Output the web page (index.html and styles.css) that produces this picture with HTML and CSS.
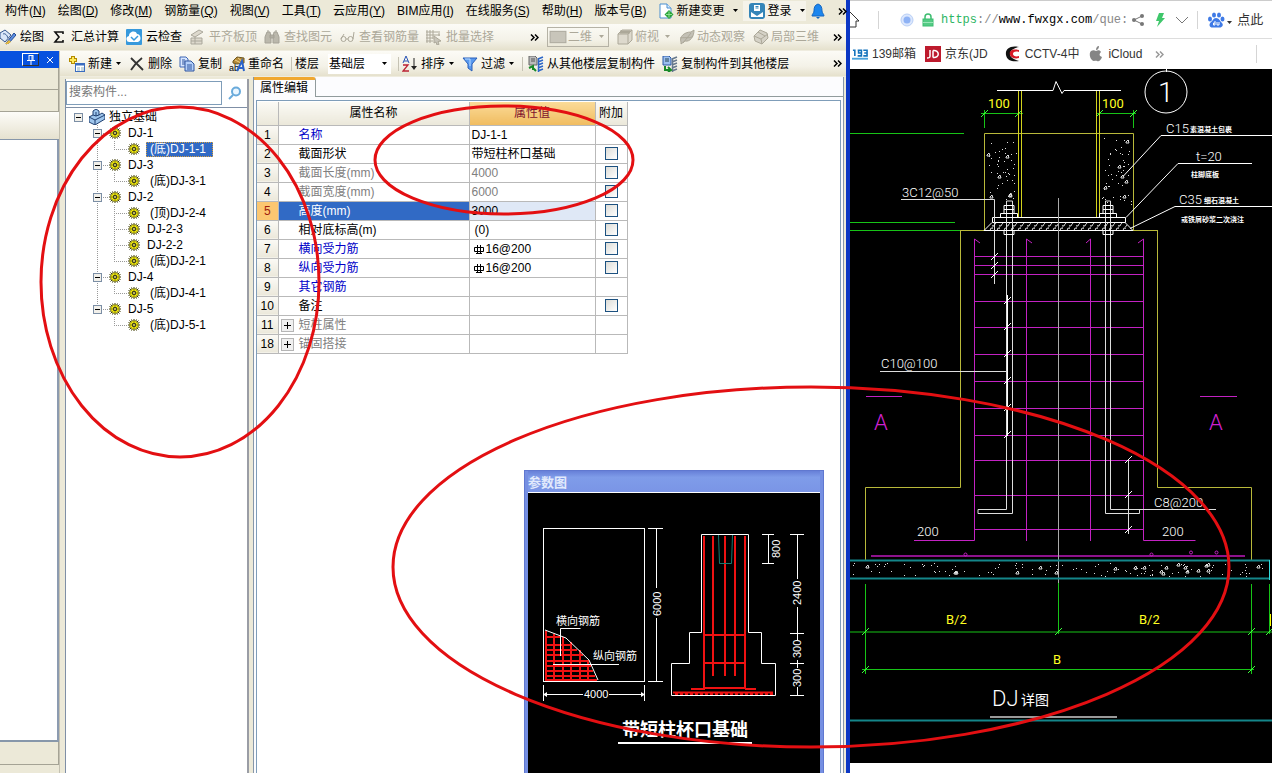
FILE: index.html
```html
<!DOCTYPE html>
<html lang="zh-CN">
<head>
<meta charset="utf-8">
<title>构件属性编辑</title>
<link rel="stylesheet" href="styles.css">
</head>
<body>
<svg class="defs" aria-hidden="true">
  <symbol id="gear" viewBox="0 0 12 12"><path d="M6 0v12M0 6h12M1.500 1.500l9 9M10.500 1.500l-9 9M3.500 .5l5 11M8.500 .5l-5 11M.5 3.500l11 5M.5 8.500l11-5" stroke="#3c3a00"/><circle cx="6" cy="6" r="4.300" fill="#f6ee10" stroke="#6d6900" stroke-width=".6"/><path d="M6 2v8M2 6h8M3.500 3.500l5 5M8.500 3.500l-5 5" stroke="#6d6900" stroke-width=".8"/><circle cx="6" cy="6" r="1.500" fill="#fff86a" stroke="#222"/></symbol>
  <symbol id="down" viewBox="0 0 7 4"><path d="M1 0h5L3.500 3z" fill="currentColor"/></symbol>
  <symbol id="more" viewBox="0 0 9 7"><path d="M1 .5l3 3-3 3M5 .5l3 3-3 3" fill="none" stroke="currentColor" stroke-width="1.500"/></symbol>
</svg>
<div class="screen">
<main class="app">
  <nav class="menubar">
    <button>构件(<u>N</u>)</button><button>绘图(<u>D</u>)</button><button>修改(<u>M</u>)</button><button>钢筋量(<u>Q</u>)</button><button>视图(<u>V</u>)</button><button>工具(<u>T</u>)</button><button>云应用(<u>Y</u>)</button><button>BIM应用(<u>I</u>)</button><button>在线服务(<u>S</u>)</button><button>帮助(<u>H</u>)</button><button>版本号(<u>B</u>)</button>
    <div class="account">
      <button><svg class="ic" viewBox="0 0 16 16"><path d="M2 1h7l4 4v10H2z" fill="#fff" stroke="#4b8fd0"/><path d="M9 1v4h4" fill="#d8ecff" stroke="#4b8fd0"/><path d="M11 7l4.500 4.500L11 16l-4.500-4.500z" fill="#28a33a"/><path d="M11 8.500v6M8 11.500h6" stroke="#8fe08f"/></svg>新建变更<svg class="dn"><use href="#down"/></svg></button>
      <button class="login"><svg class="ic" viewBox="0 0 16 16"><rect width="16" height="16" rx="3" fill="#3585b8"/><path d="M5 2h6v6H5z" fill="#fff"/><path d="M6.500 3.500h3M6.500 5h3" stroke="#3585b8"/><path d="M2 14V9l3 2 3 2 3-2 3-2v5z" fill="#fff"/></svg>登录<svg class="dn"><use href="#down"/></svg></button>
      <button aria-label="通知"><svg class="ic" viewBox="0 0 16 16"><path d="M8 1C5 2 4 4 4 8c0 2-2 3-2 5h12c0-2-2-3-2-5 0-4-1-6-4-7z" fill="#1c86ee" stroke="#1466c0"/><path d="M6 14h4l-2 2z" fill="#1466c0"/></svg></button>
      <button class="mo" aria-label="更多"><svg><use href="#more"/></svg></button>
    </div>
  </nav>
  <div class="toolbar">
    <button><svg class="ic" viewBox="0 0 16 16"><path d="M0 4l5-3 6 5-6 7-5-4z" fill="#d9e6f8" stroke="#35578f"/><path d="M3 5c2-1 4 1 5 4" fill="none" stroke="#35578f"/><path d="M7 13l7-9 2 2-7 8-3 1z" fill="#5d8fe0" stroke="#254b94"/><path d="M5 15l4-4 2 2-3 2z" fill="#e8b93c"/></svg>绘图</button>
    <button><svg class="ic" viewBox="0 0 16 16"><path d="M12 5V3H4l4 5-4 5h8v-2" fill="none" stroke="#111" stroke-width="1.600"/></svg>汇总计算</button>
    <button><svg class="ic" viewBox="0 0 16 16"><rect width="16" height="16" rx="1" fill="#3799dc"/><path d="M4 13a3 3 0 0 1-1-6c0-5 7-6 8-2 4 0 5 7 1 8z" fill="#fff"/><path d="M5 8l3 3 4-4" fill="none" stroke="#3799dc" stroke-width="1.500"/></svg>云检查</button>
    <button disabled><svg class="ic" viewBox="0 0 16 16"><path d="M2 6l8-5 4 2-8 5zM2 9h11v6H2zM2 12h11M6 8v7" fill="#ddd9cd" stroke="#aaa79b"/></svg>平齐板顶</button>
    <button disabled><svg class="ic" viewBox="0 0 16 16"><path d="M1 13V8l2-5h3l1 5v6H1zM9 14V8l1-5h3l2 5v6zM6 6h4v3H6zM4 3V1m8 2V1" fill="#bbb8ac" stroke="#a5a297"/></svg>查找图元</button>
    <button disabled><svg class="ic" viewBox="0 0 16 16"><circle cx="4.500" cy="10" r="2.500"/><circle cx="11.500" cy="10" r="2.500"/><path d="M7 10h2M2 10L5 5M14 10l1-7" /></svg>查看钢筋量</button>
    <button disabled><svg class="ic" viewBox="0 0 16 16"><path d="M1 1v13M4 1v13M7 1v9M0 3h12M0 6h14M0 9h7M0 12h7M13 2v5"/><path d="M8 7l7 5-3 .5 1 3-2 .5-1-3-2 1z" fill="#c8c5ba"/></svg>批量选择</button>
    <div class="viewtools">
      <button class="mo" aria-label="更多工具"><svg><use href="#more"/></svg></button>
      <span class="combo dim"><svg viewBox="0 0 16 12"><rect x="1" y="1" width="14" height="10" fill="#c8c5ba" stroke="#b0ada2"/></svg><select disabled aria-label="视图维度"><option>二维</option></select><svg class="dn"><use href="#down"/></svg></span>
      <button disabled><svg class="ic" viewBox="0 0 16 16"><path d="M1 5l4-4h10v10l-4 4H1z" fill="#ddd9cd"/><path d="M1 5h10v10M11 5l4-4"/><path d="M3 3h10" stroke-width="3"/></svg>俯视<svg class="dn"><use href="#down"/></svg></button>
      <button disabled><svg class="ic" viewBox="0 0 16 16"><path d="M2 13C0 8 5 3 12 3l3-2c0 7-4 12-9 11l-4 3z" fill="#c3c0b5"/><path d="M1 9c6-1 10 1 13-2M4 14L12 4"/></svg>动态观察</button>
      <button disabled><svg class="ic" viewBox="0 0 16 16"><path d="M1 7l6-6 7 3 1 5-6 6-7-3z" fill="#d5d2c7"/><path d="M1 7l7 3 7-5M8 10l1 5M5 3l7 4"/></svg>局部三维</button>
      <button class="mo" aria-label="更多视图"><svg><use href="#more"/></svg></button>
    </div>
  </div>
  <div class="work">
    <aside class="dock">
      <div class="docktitle"><button aria-label="固定"><svg viewBox="0 0 10 10"><path d="M3 0v5M7 0v5M3 .5h4M1 5.500h8M5 6v4M6 1v4" stroke="#fff" fill="none"/></svg></button><button class="x" aria-label="关闭"><svg viewBox="0 0 8 8"><path d="M1 1l6 6M7 1L1 7" stroke="#fff"/></svg></button></div>
      <div class="d1"></div><div class="d2"></div><div class="d3"></div><div class="d4"></div><div class="d5"></div><div class="d6"></div>
    </aside>
    <section class="center">
      <div class="toolbar second">
        <button><svg class="ic" viewBox="0 0 16 16"><path d="M4 0v8M0 4h8" stroke="#b38b00" stroke-width="4"/><path d="M4 1v6M1 4h6" stroke="#ffe95a" stroke-width="2"/><rect x="6.500" y="7.500" width="9" height="8" fill="#fff" stroke="#3a6cc0"/><path d="M7 8.500h8" stroke="#3a6cc0" stroke-width="2"/><path d="M8 12h3M12 12h3M8 14h3M12 14h3" stroke="#8ab"/></svg>新建<svg class="dn"><use href="#down"/></svg></button>
        <button><svg class="ic" viewBox="0 0 16 16"><path d="M2 2l12 12M13 2C9 5 5 9 2 14" stroke="#333" stroke-width="1.800" fill="none"/></svg>删除</button>
        <button><svg class="ic" viewBox="0 0 16 16"><path d="M1 1h6l2 2v8H1z" fill="#d7e6ff" stroke="#3f67b5"/><path d="M6 5h6l3 3v7H6z" fill="#b4d0fa" stroke="#2e559f"/><path d="M3 4h3M3 6h3M3 8h3M8 9h5M8 11h5M8 13h5" stroke="#2e559f"/></svg>复制</button>
        <button><svg class="ic" viewBox="0 0 16 16"><path d="M4 5l4-4 7 1v5L8 8 4 7z" fill="#b58b38" stroke="#6f5720"/><path d="M6 4l6 3M9 2l5 4" stroke="#f3d489"/><text x="0" y="15" class="abi">ab</text><path d="M8 15L13 5l2 10M10 12h5" stroke="#2a62c9" stroke-width="2" fill="none"/></svg>重命名</button>
        <span class="sep"></span>
        <label class="floor">楼层<span class="combo"><select><option>基础层</option></select><svg class="dn"><use href="#down"/></svg></span></label>
        <span class="sep"></span>
        <button><svg class="ic" viewBox="0 0 16 16"><path d="M1 7l3-7 3 7M2 5h4" stroke="#2b55b5" fill="none"/><path d="M1 9h5l-5 6h6" stroke="#b23" fill="none" stroke-width="1.300"/><path d="M12 2v10" stroke="#222"/><path d="M9 10h6l-3 4z" fill="#222"/></svg>排序<svg class="dn"><use href="#down"/></svg></button>
        <button><svg class="ic" viewBox="0 0 16 16"><path d="M1 2h14L10 8v7l-4-3V8z" fill="#5a9af0" stroke="#2a5fb8"/><path d="M3 3h5L8 10" stroke="#b9dbff" fill="none"/></svg>过滤<svg class="dn"><use href="#down"/></svg></button>
        <span class="sep"></span>
        <button class="from"><svg class="ic" viewBox="0 0 16 16"><path d="M1 0h6l2 2v7H1z" fill="#bbb" stroke="#666"/><path d="M3 3h4M3 5h4" stroke="#555"/><path d="M10 3l5-2M10 6l5-2M10 9l5-2M10 12l5-2M10 15l5-2M10.500 3v13" stroke="#2b66c8" stroke-width="1.500"/><path d="M1 12l4-2v4M5 12l3 3" stroke="#188a28" stroke-width="2" fill="none"/></svg>从其他楼层复制构件</button>
        <button><svg class="ic" viewBox="0 0 16 16"><path d="M1 0h6l2 2v7H1z" fill="#9dc0f0" stroke="#2b58a5"/><path d="M3 3h4M3 5h4" stroke="#245"/><path d="M10 3l5-2M10 6l5-2M10 9l5-2M10 12l5-2M10 15l5-2M10.500 3v13" stroke="#66788d" stroke-width="1.500"/><path d="M3 10v4h5M6 11l3 3-3 2" stroke="#188a28" stroke-width="2" fill="none"/></svg>复制构件到其他楼层</button>
        <button class="mo end" aria-label="更多命令"><svg><use href="#more"/></svg></button>
      </div>
      <div class="panes">
        <section class="treepane">
          <form class="search"><input type="text" aria-label="搜索构件" placeholder="搜索构件..."><button type="button" aria-label="搜索"><svg viewBox="0 0 14 14"><circle cx="8" cy="5.500" r="4" fill="#eaf6ff" stroke="#69aadb" stroke-width="2"/><path d="M5 9l-4 4" stroke="#69aadb" stroke-width="2"/></svg></button></form>
          <ul class="tree">
            <li class="r0"><button class="exp" aria-label="折叠"></button><svg class="ic" viewBox="0 0 16 16"><path d="M0 8l4-2V2l3-2 3 2v4l3-2 3 2v4L6 16l-6-3z" fill="#9ec5ec" stroke="#1f3f70"/><path d="M0 8l6 3 10-5M6 11v5M4 6l3 1 3-1M7 3v4" fill="none" stroke="#1f3f70"/></svg><span>独立基础</span></li>
            <li class="r1"><i class="v"><button class="exp" aria-label="折叠"></button></i><i class="h"></i><svg class="g"><use href="#gear"/></svg><span>DJ-1</span></li>
            <li class="r2"><i class="v"></i><i class="e last"></i><svg class="g"><use href="#gear"/></svg><span class="sel">(底)DJ-1-1</span></li>
            <li class="r1"><i class="v"><button class="exp" aria-label="折叠"></button></i><i class="h"></i><svg class="g"><use href="#gear"/></svg><span>DJ-3</span></li>
            <li class="r2"><i class="v"></i><i class="e last"></i><svg class="g"><use href="#gear"/></svg><span>(底)DJ-3-1</span></li>
            <li class="r1"><i class="v"><button class="exp" aria-label="折叠"></button></i><i class="h"></i><svg class="g"><use href="#gear"/></svg><span>DJ-2</span></li>
            <li class="r2"><i class="v"></i><i class="e"></i><svg class="g"><use href="#gear"/></svg><span>(顶)DJ-2-4</span></li>
            <li class="r2"><i class="v"></i><i class="e"></i><svg class="g"><use href="#gear"/></svg><span class="near">DJ-2-3</span></li>
            <li class="r2"><i class="v"></i><i class="e"></i><svg class="g"><use href="#gear"/></svg><span class="near">DJ-2-2</span></li>
            <li class="r2"><i class="v"></i><i class="e last"></i><svg class="g"><use href="#gear"/></svg><span>(底)DJ-2-1</span></li>
            <li class="r1"><i class="v"><button class="exp" aria-label="折叠"></button></i><i class="h"></i><svg class="g"><use href="#gear"/></svg><span>DJ-4</span></li>
            <li class="r2"><i class="v"></i><i class="e last"></i><svg class="g"><use href="#gear"/></svg><span>(底)DJ-4-1</span></li>
            <li class="r1"><i class="v end"><button class="exp" aria-label="折叠"></button></i><i class="h"></i><svg class="g"><use href="#gear"/></svg><span>DJ-5</span></li>
            <li class="r2"><i class="none"></i><i class="e last"></i><svg class="g"><use href="#gear"/></svg><span>(底)DJ-5-1</span></li>
          </ul>
        </section>
        <section class="props">
          <div class="tabs"><button class="tab">属性编辑</button></div>
          <div class="sheet">
            <table>
              <colgroup><col class="c1"><col class="c2"><col class="c3"><col class="c4"></colgroup>
              <thead><tr><th></th><th>属性名称</th><th class="hot">属性值</th><th>附加</th></tr></thead>
              <tbody>
                <tr><th>1</th><td class="n blue">名称</td><td>DJ-1-1</td><td></td></tr>
                <tr><th>2</th><td class="n">截面形状</td><td>带短柱杯口基础</td><td class="k"><input type="checkbox" aria-label="附加 截面形状"></td></tr>
                <tr class="gray"><th>3</th><td class="n">截面长度(mm)</td><td>4000</td><td class="k"><input type="checkbox" aria-label="附加 截面长度"></td></tr>
                <tr class="gray"><th>4</th><td class="n">截面宽度(mm)</td><td>6000</td><td class="k"><input type="checkbox" aria-label="附加 截面宽度"></td></tr>
                <tr class="cur"><th>5</th><td class="n">高度(mm)</td><td>3000</td><td class="k"><input type="checkbox" aria-label="附加 高度"></td></tr>
                <tr><th>6</th><td class="n">相对底标高(m)</td><td class="in">(0)</td><td class="k"><input type="checkbox" aria-label="附加 相对底标高"></td></tr>
                <tr><th>7</th><td class="n blue">横向受力筋</td><td><svg class="bar" viewBox="0 0 10 10"><path d="M.5 3.500h9v4h-9zM3.500 1v8M6.500 1v8M2 9.500h6" stroke="#000" fill="none"/></svg>16@200</td><td class="k"><input type="checkbox" aria-label="附加 横向受力筋"></td></tr>
                <tr><th>8</th><td class="n blue">纵向受力筋</td><td><svg class="bar" viewBox="0 0 10 10"><path d="M.5 3.500h9v4h-9zM3.500 1v8M6.500 1v8M2 9.500h6" stroke="#000" fill="none"/></svg>16@200</td><td class="k"><input type="checkbox" aria-label="附加 纵向受力筋"></td></tr>
                <tr><th>9</th><td class="n blue">其它钢筋</td><td></td><td></td></tr>
                <tr><th>10</th><td class="n">备注</td><td></td><td class="k"><input type="checkbox" aria-label="附加 备注"></td></tr>
                <tr class="gray"><th>11</th><td class="p"><button class="plus" aria-label="展开"></button>短柱属性</td><td></td><td></td></tr>
                <tr class="gray"><th>18</th><td class="p"><button class="plus" aria-label="展开"></button>锚固搭接</td><td></td><td></td></tr>
              </tbody>
            </table>
          </div>
          <section class="float">
            <h2>参数图</h2>
            <svg class="param" viewBox="528 493 292 280" preserveAspectRatio="xMinYMin slice">
              <g fill="none" stroke="#fff">
                <rect x="543.500" y="528.500" width="101" height="153"/>
                <path d="M656.500 528v60M656.500 618v63M648 528.500h15M648 681.500h15M543.500 685v16M644.500 685v16M544 694.500h39M609 694.500h35"/>
                <path d="M547 692v5l-4-2.500zM641 692v5l4-2.500z" fill="#fff" stroke="none"/>
              </g>
              <path d="M545 637h16M545 645h27M545 650h32M545 655h38M545 661h43M545 666h46M545 671h48M545 676h50M545 680h52M546 631v50M554 634v47M563 637v44M571 642v39M580 650v31M588 660v21" stroke="#ef1212" stroke-width="2"/>
              <g fill="none" stroke="#fff">
                <path d="M545 630l21 8 23 22 9 20M560.500 656v-27.500h20M553 664.500h66"/>
                <path d="M701.500 534.500h47v98h13v31h14v32h-104v-32h18v-31h12z"/>
                <path d="M762 534.500h12M762 563.500h12M768.500 534v29M790 534.500h14M797.500 534v45M797.500 607v33M790 633.500h14M797.500 660v8M790 663.500h14M797.500 687v8M790 695.500h14"/>
              </g>
              <path d="M704 536v153M713 536v140M725 536v140M735 536v140M745 536v153M704 635h41M704 663h41M691 689h14M745 689h11M704 688h41" stroke="#ef1212" stroke-width="2" fill="none"/>
              <path d="M673 692.500h100" stroke="#ef1212" stroke-width="2"/><path d="M675 694h98" stroke="#ef1212" stroke-width="2" stroke-dasharray="3 2"/>
              <path d="M718.500 535l1 28.500h12l1-28.500" stroke="#157a70" fill="none"/>
              <g fill="#fff" class="ptext">
                <text x="556" y="625">横向钢筋</text><text x="593" y="660">纵向钢筋</text><text x="584" y="698">4000</text>
                <text transform="translate(661 616) rotate(-90)">6000</text><text transform="translate(780 558) rotate(-90)">800</text><text transform="translate(801 605) rotate(-90)">2400</text><text transform="translate(801 658) rotate(-90)">300</text><text transform="translate(801 687) rotate(-90)">300</text>
                <text x="622" y="736" class="ptitle">带短柱杯口基础</text>
              </g>
              <path d="M618 743h134" stroke="#fff" stroke-width="2"/>
            </svg>
          </section>
        </section>
      </div>
    </section>
  </div>
</main>
<section class="browser">
  <div class="address">
    <button aria-label="主页" class="home"><svg viewBox="0 0 10 20"><path d="M0 2l9 9H6v6H0" fill="none" stroke="#333"/></svg></button>
    <span class="rule"></span>
    <svg class="site" viewBox="0 0 14 14"><circle cx="7" cy="7" r="6" fill="#dbe7fd" stroke="#b9cff6"/><circle cx="7" cy="7" r="3.500" fill="#8eb2f5"/></svg>
    <svg class="lock" viewBox="0 0 12 14"><path d="M3 7V4a3 3 0 0 1 6 0v3" fill="none" stroke="#3dbd70" stroke-width="1.500"/><rect x="1" y="6" width="10" height="7" fill="#55cb85" stroke="#3dbd70"/><path d="M1 9.500h10" stroke="#9be5b8"/></svg>
    <a class="url" href="#"><em>https</em>://<b>www.fwxgx.com</b>/que:</a>
    <button aria-label="分享"><svg viewBox="0 0 14 14"><path d="M11 3L3 7l8 4" fill="none" stroke="#777"/><circle cx="11" cy="3" r="2" fill="#777"/><circle cx="3" cy="7" r="2" fill="#777"/><circle cx="11" cy="11" r="2" fill="#777"/></svg></button>
    <button aria-label="极速模式"><svg viewBox="0 0 14 14"><path d="M6 0h5L9 5h3L4 14l2-6H3z" fill="#3fc76b"/></svg></button>
    <button aria-label="展开"><svg viewBox="0 0 14 14"><path d="M1 4l6 6 6-6" fill="none" stroke="#777"/></svg></button>
    <span class="rule"></span>
    <button class="baidu"><svg viewBox="0 0 18 18"><g fill="#3f7ae6"><ellipse cx="3" cy="8" rx="2" ry="2.500"/><ellipse cx="7" cy="4" rx="2" ry="2.500"/><ellipse cx="12" cy="4" rx="2" ry="2.500"/><ellipse cx="15.500" cy="8" rx="2" ry="2.500"/><path d="M9 7c3 0 4 3 6 5s0 5-3 4.500H6C3 17 1 14 4 11c2-1 2-4 5-4z"/></g><path d="M8 10v4H6.500v-2H8M10 11v3h2v-3" fill="none" stroke="#fff"/></svg><svg class="dn"><use href="#down"/></svg>点此</button>
  </div>
  <div class="bookmarks">
    <a href="#"><svg class="wide" viewBox="0 0 17 14"><path d="M1 3h2v6M6 3h4v3H7V3.500M10 3v6H6M12 3h4v6h-4M13 6h3" fill="none" stroke="#1473bc" stroke-width="1.700"/><path d="M0 12h17" stroke="#4aa3dd" stroke-width="2"/></svg>139邮箱</a>
    <a href="#"><svg viewBox="0 0 16 16"><rect width="16" height="16" fill="#bd1a2d"/><path d="M5 4v6c0 2-1 2-3 2M8 4.500v7M8 4.500c7-1 7 8 0 7" fill="none" stroke="#fff" stroke-width="1.500"/></svg>京东(JD</a>
    <a href="#" class="cctv"><svg viewBox="0 0 16 16"><path d="M14 1C5-1 0 3 1 9s7 7 13 6c-6-2-9-4-9-7s3-6 9-7z" fill="#111"/><path d="M14 4C6 2 4 6 5 9s5 4 9 3v-2c-3 1-6 0-6-2s2-3 6-2z" fill="#d71927"/></svg>CCTV-4中</a>
    <a href="#" class="icloud"><svg viewBox="0 0 14 16"><path d="M7 5c2-1 4-1 5 1-2 2-2 4 1 5-1 3-3 5-5 4-1-.5-2 0-3 0C2 15-1 8 2 5c2-1 3-1 5 0zM7 4c0-2 1-4 3-4 0 2-1 4-3 4z" fill="#858585"/></svg>iCloud</a>
    <button class="mo" aria-label="更多书签"><svg><use href="#more"/></svg></button>
    <span class="rule"></span>
  </div>
  <svg class="cad" viewBox="850 69 422 694">
    <rect x="850" y="69" width="422" height="694" fill="#000"/>
    <g fill="none" stroke="#17c417"><path d="M850 133.500h114M850 222.500h105M850 230.500h110M981 113.500h42M1096 113.500h40M984.500 110v18M1133.500 110v18M1018.500 110v10M1099.500 110v18"/><path d="M865.500 584v90M1251.500 584v90M1058.500 579v55M1269.500 584v50M850 632h422M862 669.500h392"/>
      <path d="M981 117l7-7M1015 117l7-7M1096 117l7-7M1130 117l7-7M862 635l7-7M1055 635l7-7M1248 635l7-7M1266 635l6-6M862 673l7-7M1248 673l7-7" stroke="#3cff3c"/></g>
    <g fill="none" stroke="#b9b93a"><path d="M984.500 230v-96.500h149V230M960 230.500h198M960.500 230v257.500h-95V561M1157.500 230v257.500h94V561"/><path d="M1018.500 91v126M1021.500 91v126M1096.500 91v126M1099.500 91v126" stroke="#d2d21c"/><path d="M1270.500 614v12" stroke="#ff0"/></g>
    <g fill="none" stroke="#c322c3"><path d="M980 243l-5.500-4v301.500H914M1032 243l-5.500-4V541M1086 243l4.500-4V541M1138 243l5.500-4v301.500h52"/><path d="M974 256.500h170M974 265.500h170M974 274.500h170M974 301.500h170M974 327.500h170M974 354.500h170M974 381.500h170M974 408.500h170M974 435.500h170M974 460.500h170M974 495.500h170M974 529.500h170M866 396.500h36M1200 396.500h37"/><path d="M871 556h374" stroke="#8d128d" stroke-width="2"/><circle cx="965.500" cy="554.500" r="1.500"/><circle cx="1151.500" cy="554.500" r="1.500"/><circle cx="1191" cy="552.500" r="1.500"/><circle cx="1216.500" cy="552.500" r="1.500"/></g>
    <g fill="none" stroke="#fff"><path d="M997 90.500h56l3-9 6 12 2-3h57M1166.500 69v3M1161 135.500h111M1161 135.500l-38 41M1252 163.500h-74l-52 54M1272 206.500h-97l-45 22"/><circle cx="1166" cy="92" r="21"/>
      <path d="M992.500 217.500h133v5h-133zM992 222.500l-8 8h149l-8-8"/><path d="M990 230l6-7M997 230l6-7M1004 230l6-7M1011 230l6-7M1018 230l6-7M1025 230l6-7M1032 230l6-7M1039 230l6-7M1046 230l6-7M1053 230l6-7M1060 230l6-7M1067 230l6-7M1074 230l6-7M1081 230l6-7M1088 230l6-7M1095 230l6-7M1102 230l6-7M1109 230l6-7M1116 230l6-7M1123 230l4-5" stroke="#ccc"/><path d="M990 228.500h138M992 225.500h130" stroke="#999" stroke-dasharray="3 4"/>
      <path d="M1058.500 198v385" stroke="#aaa"/><path d="M901 199.500h93.500V284M880 371.500h127M1139 509.500h77M1128.500 460v74" stroke="#ddd"/>
      <path d="M1006.500 201v308.500H978v4h34.500V201zM1110.500 201v308.500h29v4h-34V201z" stroke="#ddd"/><path d="M1007.500 295v141"/>
      <path d="M1004 205.500h10v8h-10zM1004 209.500h10M1000.500 213.500h17v4h-17zM1004 230.500h10v4h-10zM1103 205.500h10v8h-10zM1103 209.500h10M1099.500 213.500h17v4h-17zM1103 230.500h10v4h-10z"/>
      <path d="M991 260l7-7M991 269l7-7M991 278l7-7M1004 304l7-7M1004 330l7-7M1004 357l7-7M1004 384l7-7M1004 411l7-7M1004 438l7-7M1125 463l7-7M1125 498l7-7M1125 533l7-7"/></g>
    <path d="M850 560.500h420M850 578.500h420M850 720.500h422" stroke="#14868a" stroke-width="2"/><path d="M1269.500 560v20" stroke="#3dd"/>
    <path d="M990 717h127" stroke="#999" stroke-width="2"/>
    <g id="stones" fill="none" stroke="#ddd"></g>
    <g class="ctext" fill="#fff">
      <g class="yellow" fill="#ff2"><text x="988" y="108">100</text><text x="1102" y="108">100</text><text x="946" y="624">B/2</text><text x="1139" y="624">B/2</text><text x="1053" y="664">B</text></g>
      <text x="902" y="197">3C12@50</text><text x="881" y="368">C10@100</text><text x="1154" y="507">C8@200</text><text x="917" y="536">200</text><text x="1162" y="536">200</text><text x="1166" y="133">C15</text><text x="1196" y="161">t=20</text><text x="1179" y="204">C35</text>
      <g class="tiny"><text x="1190" y="132">素混凝土包裹</text><text x="1191" y="177">柱脚底板</text><text x="1204" y="203">细石混凝土</text><text x="1181" y="222">或铁屑砂浆二次浇注</text></g>
      <text x="1158" y="102" class="large">1</text><text x="992" y="706" class="mark">DJ</text><text x="1021" y="705" class="detail">详图</text>
      <g class="mark" fill="#d020d0"><text x="874" y="430">A</text><text x="1209" y="430">A</text></g>
    </g>
  </svg>
</section>
<svg class="notes" viewBox="0 0 1272 773" preserveAspectRatio="none" aria-hidden="true"><g fill="none" stroke="#e30f12" stroke-width="3"><ellipse cx="180" cy="282" rx="139" ry="175"/><ellipse cx="504" cy="160" rx="129" ry="54"/><ellipse cx="811" cy="567" rx="418" ry="180"/></g></svg>
</div>
<script src="stones.js"></script>
</body>
</html>
```
FILE: stones.js
```js
const group = document.getElementById('stones');
let seed = 7;
const rnd = () => (seed = (seed * 16807) % 2147483647) / 2147483647;
function scatter(x, y, w, h, dots, stones) {
  let d = '';
  for (let i = 0; i < dots; i++) d += `M${Math.round(x + rnd() * w)} ${Math.round(y + rnd() * h) + 0.5}h1`;
  for (let i = 0; i < stones; i++) d += `M${Math.round(x + rnd() * (w - 4))} ${Math.round(y + 2 + rnd() * (h - 4))}l2-2 1 3-3 0z`;
  const p = document.createElementNS('http://www.w3.org/2000/svg', 'path');
  p.setAttribute('d', d);
  group.appendChild(p);
}
scatter(987, 138, 29, 66, 46, 6);
scatter(1102, 138, 29, 66, 46, 6);
scatter(852, 563, 412, 13, 110, 20);
```
FILE: styles.css
```css
* { box-sizing: border-box; }
body { margin: 0; font: 12px/16px "Liberation Sans", "Noto Sans CJK SC", sans-serif; color: #000; background: #fff; }
button, input, select { font: inherit; color: inherit; }
button { border: 0; background: none; padding: 0; white-space: nowrap; }
a { color: inherit; text-decoration: none; white-space: nowrap; }
.defs { position: absolute; width: 0; height: 0; }
.screen { position: relative; display: grid; grid-template-columns: 850fr 422fr; height: 100vh; overflow: hidden; }
.notes { position: absolute; inset: 0; width: 100%; height: 100%; pointer-events: none; }

.app { min-width: 0; min-height: 0; display: flex; flex-direction: column; background: #ece9d8; border-right: 4px solid #0c37c4; }
.app button { display: flex; align-items: center; flex: none; }
.ic { width: 16px; height: 16px; flex: none; margin-right: 4px; }
.dn { width: 7px; height: 4px; flex: none; margin-left: 3px; }
.mo svg { width: 9px; height: 7px; }
.menubar { display: flex; align-items: center; gap: 12px; height: 24px; padding: 0 4px 2px 5px; background: #ece9d8; }
.app .menubar > button { display: block; }
.account { display: flex; align-items: center; margin-left: auto; gap: 4px; }
.account .ic { margin-right: 2px; }
.account .dn { margin-left: 8px; }
.login { padding: 2px 0 2px 6px; background: #f5f3ea; }
.menubar .mo { padding-left: 6px; }
.toolbar { display: flex; align-items: center; gap: 7px; height: 27px; padding-right: 4px; background: linear-gradient(#fcfbf6, #f4f2e8 60%, #e5e1cd); border-bottom: 1px solid #efecdf; }
.toolbar button:disabled { color: #aca899; }
.toolbar button:disabled .ic { fill: none; stroke: #aca899; }
.viewtools { display: flex; align-items: center; gap: 8px; margin-left: auto; }
.viewtools .ic { margin-right: 2px; }
.viewtools .dn { margin-left: 5px; }
.viewtools .mo:last-child { margin-left: 6px; }
.combo { display: inline-flex; align-items: center; height: 20px; background: #fff; padding-right: 3px; }
.combo select { appearance: none; border: 0; background: none; padding: 0 0 0 1px; width: 50px; opacity: 1; }
.combo.dim { border: 1px solid #b5b2a5; background: none; color: #aca899; width: 62px; padding-left: 1px; }
.combo.dim > svg:first-child { width: 18px; height: 14px; flex: none; }
.combo.dim select { width: 28px; flex: 1; }
.combo.dim .dn { margin-left: 0; }
.toolbar.second { height: 26px; padding-left: 9px; flex: none; }
.second .ic { margin-right: 3px; }
.second .from { margin-left: 2px; }
.floor { display: flex; align-items: center; gap: 9px; }
.sep { width: 1px; height: 14px; background: #c5c2b4; flex: none; }
.second .sep { margin-right: -4px; }
.toolbar .end { margin-left: auto; }
.abi { font-size: 9px; }

.work { flex: 1; display: flex; min-height: 0; }
.dock { width: 60px; flex: none; display: flex; flex-direction: column; border-right: 1px solid #c4c1b2; }
.docktitle { display: flex; gap: 6px; justify-content: flex-end; align-items: center; height: 17px; padding-right: 4px; background: #0751df; flex: none; }
.docktitle button { justify-content: center; width: 17px; height: 13px; border: 1px solid; border-color: #fff #333 #333 #fff; }
.app .docktitle .x { width: 10px; border: 0; }
.docktitle svg { width: 10px; height: 10px; }
.docktitle .x svg { width: 8px; height: 8px; }
.d1, .d2, .d3, .d5, .d6 { flex: none; border-bottom: 1px solid #a5a395; }
.d1, .d2 { height: 22px; border-right: 1px solid #a5a395; }
.d3 { height: 28px; background: linear-gradient(#fdfcf8, #e6e2d0); border-color: #8797aa; }
.d4 { flex: 1; background: #fff; border-right: 2px solid #8c9bb0; border-bottom: 2px solid #8797aa; }
.d5 { height: 23px; border-right: 1px solid #a5a395; }
.d6 { height: 8px; border: 0; }
.center { flex: 1; min-width: 0; display: flex; flex-direction: column; }
.panes { flex: 1; display: flex; min-height: 0; padding: 0 2px 0 5px; gap: 4px; }
.treepane { width: 184px; flex: none; display: flex; flex-direction: column; background: #fff; border-left: 1px solid #7f8fa6; border-right: 2px solid #9a9da5; margin-top: 2px; }
.search { display: flex; align-items: center; height: 29px; border-bottom: 1px solid #7f8fa6; flex: none; }
.search input { flex: 1; min-width: 0; height: 24px; border: 1px solid #7f9db9; padding: 0 2px 2px; background: #fff; }
.search input::placeholder { color: #777; opacity: 1; }
.search button { width: 25px; justify-content: center; }
.search svg { width: 14px; height: 14px; }
.tree { list-style: none; margin: 0; padding: 1px 0 0; }
.tree li { display: flex; align-items: center; height: 16px; }
.tree i { flex: none; height: 16px; display: flex; align-items: center; }
.app .exp { width: 9px; height: 9px; border: 1px solid #7b8ea5; background: linear-gradient(#000, #000) 1px 3px / 5px 1px no-repeat, #f2f0ea; }
.r0 { padding-left: 8px; }
.r0 .ic { margin: 0 4px 0 6px; }
.r1, .r2 { padding-left: 27px; }
.v { width: 10px; background: repeating-linear-gradient(#999 0 1px, #fff 1px 2px) 4px 0 / 1px 100% no-repeat; }
.v.end { background-size: 1px 8px; }
.none { width: 10px; }
.h { width: 6px; background: repeating-linear-gradient(90deg, #999 0 1px, #fff 1px 2px) 0 8px / 100% 1px no-repeat; }
.e { width: 14px; margin-left: 11px; background: repeating-linear-gradient(#999 0 1px, #fff 1px 2px) 0 0 / 1px 100% no-repeat, repeating-linear-gradient(90deg, #999 0 1px, #fff 1px 2px) 0 8px / 100% 1px no-repeat; }
.e.last { background-size: 1px 8px, 100% 1px; }
.g { width: 12px; height: 12px; flex: none; margin-right: 1px; }
.r1 span { padding-left: 6px; }
.r2 span { margin-left: 5px; padding: 0 7px 0 4px; line-height: 15px; }
.r2 .near { padding-left: 1px; }
.r2 .sel { background: #316ac5; color: #fff; outline: 1px dotted #d8a040; outline-offset: -1px; }

.props { position: relative; flex: 1; min-width: 0; display: flex; flex-direction: column; background: #fcfcfe; border-left: 1px solid #8797aa; border-right: 1px solid #8797aa; }
.tabs { height: 20px; border-bottom: 1px solid #919b9c; flex: none; display: flex; }
.app .tab { height: 20px; padding: 0 7px 1px 6px; background: #fcfcfe; border-top: 3px solid #f0a830; border-right: 1px solid #919b9c; border-radius: 0 3px 0 0; }
.sheet { flex: 1; margin: 3px 2px 0 2px; padding: 1px 0 0; border: 1px solid #7f9db9; border-bottom: 0; background: #fff; }
table { border-collapse: collapse; table-layout: fixed; width: 370px; }
.c1 { width: 21px; } .c2 { width: 191px; } .c3 { width: 126px; } .c4 { width: 32px; }
th, td { height: 19px; padding: 0 2px; border: 1px solid #b9b9b9; border-left: 0; line-height: 16px; overflow: hidden; white-space: nowrap; }
thead tr th { height: 23px; border-top: 0; }
th { font-weight: normal; text-align: center; padding: 0; background: linear-gradient(#fbfaf5, #ebe8da); }
thead .hot { background: linear-gradient(#fadb98, #f0bc60); color: #80102c; }
.n { padding-left: 20px; }
.in { padding-left: 5px; }
.blue { color: #0000c8; }
.gray td { color: #808080; }
.cur th { background: #fcc771; color: #a02010; }
.cur .n { background: #316ac5; color: #fff; }
.cur td:nth-child(3) { background: #dfe8f6; }
.k { padding: 0; text-align: center; }
.k input { appearance: none; display: block; width: 13px; height: 13px; margin: 0 auto; border: 1px solid #1c5180; background: linear-gradient(135deg, #dcdcd7, #fff); }
.bar { width: 10px; height: 10px; margin: 0 2px; vertical-align: -1px; }
.app .plus { display: inline-block; width: 13px; height: 13px; margin-right: 5px; vertical-align: -2px; border: 1px solid #b5b5b5; background: linear-gradient(#000, #000) 2px 5px / 7px 1px no-repeat, linear-gradient(#000, #000) 5px 2px / 1px 7px no-repeat, #f0f0f0; }
.float { position: absolute; right: 19px; bottom: 0; width: 300px; height: 303px; display: flex; flex-direction: column; padding: 0 3px; background: #758fe2; border: 1px solid #6078d0; border-bottom: 0; }
.float h2 { margin: 0; height: 22px; flex: none; font-size: 13px; line-height: 23px; color: #e2eafc; border-bottom: 1px solid #fff; background: linear-gradient(#6780d8, #7f9ce9 30%, #7a95e6); }
.param { flex: 1; min-height: 0; width: 100%; background: #000; }
.ptext { font-size: 11px; }
.ptitle { font-size: 18px; font-weight: bold; }

.browser { min-width: 0; background: #fff; overflow: hidden; color: #333; }
.address { display: flex; align-items: center; height: 39px; border-top: 1px solid #ccc; border-bottom: 1px solid #ddd; overflow: hidden; }
.address > * { flex: none; }
.address button { display: flex; align-items: center; margin-right: 8px; }
.address svg { width: 14px; height: 14px; }
.address .home { margin: 0 18px 0 0; }
.address .home svg { width: 10px; height: 20px; }
.rule { width: 1px; height: 18px; background: #d5d5d5; }
.address .site { margin: 0 7px 0 21px; }
.url { font: 12px/16px "Liberation Mono", monospace; color: #888; margin: 0 3px 0 6px; }
.url em { font-style: normal; color: #2eb564; }
.url b { font-weight: normal; color: #000; }
.address .baidu { margin: 0 0 0 9px; }
.address .baidu svg { width: 18px; height: 18px; }
.address .baidu .dn { width: 7px; height: 4px; margin: 6px 4px 0 1px; }
.baidu { font-size: 13px; }
.bookmarks { display: flex; align-items: center; height: 30px; padding-left: 2px; gap: 9px; }
.bookmarks a { display: flex; align-items: center; gap: 4px; }
.bookmarks a svg { width: 16px; height: 16px; }
.bookmarks .cctv { margin-left: 8px; }
.bookmarks .icloud { margin-left: 0; }
.bookmarks .mo { color: #999; margin-left: 4px; }
.bookmarks .rule { margin: 0 15px 0 auto; }
.cad { display: block; width: 100%; height: auto; }
.ctext { font-family: Roboto, "Liberation Sans", "Noto Sans CJK SC", sans-serif; font-size: 13px; font-weight: 300; }
.yellow { font-weight: 400; }
.tiny { font-size: 7px; font-weight: bold; }
.large { font-size: 28px; }
.mark { font-size: 22px; }
.detail { font-size: 14px; font-weight: 400; }
```
